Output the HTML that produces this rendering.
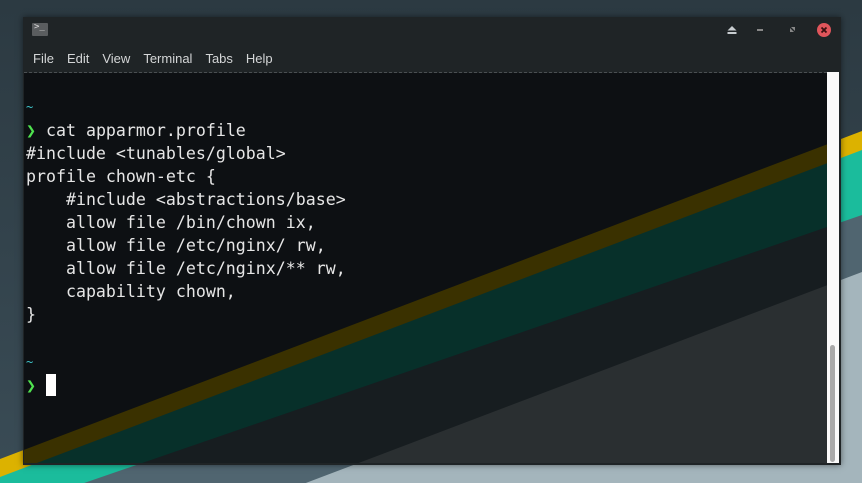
<!DOCTYPE html>
<html><head><meta charset="utf-8"><style>
*{margin:0;padding:0;box-sizing:border-box}
html,body{width:862px;height:483px;overflow:hidden}
body{position:relative;background:#2f3e47;font-family:"Liberation Sans",sans-serif}
svg.bg{position:absolute;left:0;top:0}
.win{position:absolute;left:23px;top:17px;width:818px;height:448px;background:#1f2426;box-shadow:0 0 6px rgba(0,0,0,.5);overflow:hidden}
.icon{position:absolute;left:9px;top:6px;width:16px;height:13px;background:#5a5d5f;border-radius:1px;color:#ddd;font:9px "DejaVu Sans Mono",monospace;line-height:9px;padding-left:2px}
.menu{position:absolute;top:34px;left:10px;font-size:13px;color:#d4d6d7}
.menu span{margin-right:13px}
.term{position:absolute;left:1px;top:55px;width:803px;height:391px;overflow:hidden;border-top:1px dashed #4a4f52}
.txt{position:absolute;left:2px;top:-2px;font:16.6px "DejaVu Sans Mono",monospace;line-height:23px;color:#e6e6e6;white-space:pre}
.c{color:#3fc6cc;font-size:12px}
.g{color:#4fe34f}
.cur{display:inline-block;width:10px;height:22px;background:#fff;vertical-align:-5px}
.sb{position:absolute;left:804px;top:55px;width:12px;height:391px;background:#fafafa}
.th{position:absolute;left:3px;top:273px;width:5px;height:117px;background:#a9a9a9;border-radius:3px}
</style></head><body>
<svg class="bg" width="862" height="483">
<defs><linearGradient id="g1" x1="0" y1="0" x2="0" y2="1"><stop offset="0" stop-color="#2c3a42"/><stop offset="1" stop-color="#3a4c56"/></linearGradient></defs>
<rect width="862" height="483" fill="url(#g1)"/>
<polygon points="0,459 862,131 862,483 0,483" fill="#dcb200"/>
<polygon points="0,477 862,150 862,483 0,483" fill="#1bbc9c"/>
<polygon points="0,512 862,215 862,483 0,483" fill="#506570"/>
<polygon points="0,599 862,272 862,483 0,483" fill="#a4b5bc"/>
</svg>
<div class="win">
<div class="icon">&gt;_</div>
<svg style="position:absolute;left:703px;top:4px" width="115" height="20">
<polygon points="6,5 10.5,9.5 1.5,9.5" fill="#c8cdd0"/><rect x="1.5" y="11" width="9" height="2" fill="#c8cdd0"/>
<rect x="31" y="8" width="6" height="2" fill="#888"/>
<polygon points="65,6 69,6 69,10" fill="#888"/><polygon points="64,7 68,11 64,11" fill="#888"/>
<circle cx="98" cy="9" r="7" fill="#e0555b"/>
<path d="M95.5 6.5L100.5 11.5M100.5 6.5L95.5 11.5" stroke="#3a1010" stroke-width="1.8"/>
</svg>
<div class="menu"><span>File</span><span>Edit</span><span>View</span><span>Terminal</span><span>Tabs</span><span>Help</span></div>
<div class="term">
<svg style="position:absolute;left:-24px;top:-73px" width="862" height="483">
<rect width="862" height="483" fill="#0d1013"/>
<polygon points="0,459 862,131 862,483 0,483" fill="#3a3100"/>
<polygon points="0,477 862,150 862,483 0,483" fill="#07302a"/>
<polygon points="0,512 862,215 862,483 0,483" fill="#171d20"/>
<polygon points="0,599 862,272 862,483 0,483" fill="#2a2f31"/>
</svg>
<div class="txt">
<span class="c">~</span>
<span class="g">❯</span> cat apparmor.profile
#include &lt;tunables/global&gt;
profile chown-etc {
    #include &lt;abstractions/base&gt;
    allow file /bin/chown ix,
    allow file /etc/nginx/ rw,
    allow file /etc/nginx/** rw,
    capability chown,
}

<span class="c">~</span>
<span class="g">❯</span> <span class="cur"></span></div>
</div>
<div class="sb"><div class="th"></div></div>
</div>
</body></html>
